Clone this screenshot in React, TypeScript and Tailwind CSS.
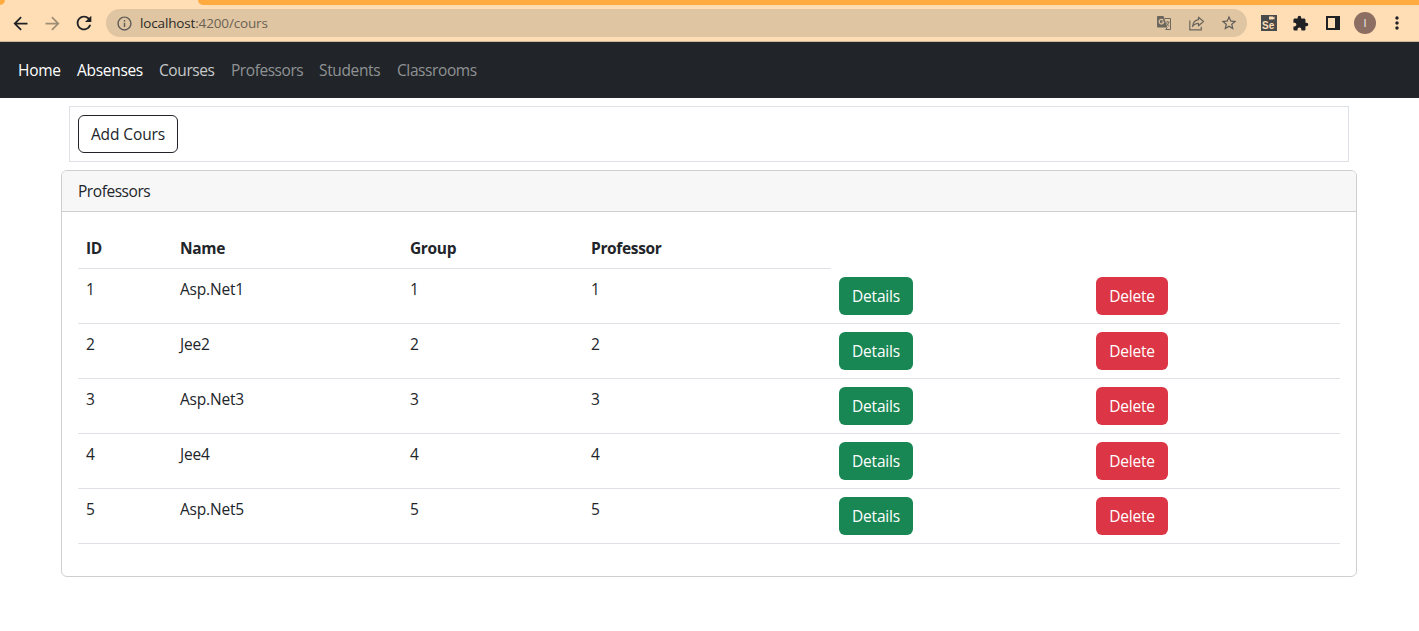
import React from "react";
import {
  MdArrowBack,
  MdArrowForward,
  MdRefresh,
  MdInfoOutline,
  MdStarBorder,
  MdExtension,
  MdMoreVert,
} from "react-icons/md";

const courses = [
  { id: 1, name: "Asp.Net1", group: 1, professor: 1 },
  { id: 2, name: "Jee2", group: 2, professor: 2 },
  { id: 3, name: "Asp.Net3", group: 3, professor: 3 },
  { id: 4, name: "Jee4", group: 4, professor: 4 },
  { id: 5, name: "Asp.Net5", group: 5, professor: 5 },
];

function TranslateIcon() {
  return (
    <svg width="15" height="15" viewBox="0 0 15 15">
      <path d="M1 0h5.500l3.800 11.500H1a1 1 0 0 1-1-1V1a1 1 0 0 1 1-1z" fill="#6b665e" />
      <path d="M6.300 4.300A2.300 2.300 0 1 0 6.700 6H4.600" fill="none" stroke="#dfc5a1" strokeWidth="1.200" />
      <path d="M7.500 2.500h6v11H8.700l1.500-2" fill="none" stroke="#6b665e" strokeWidth="1" />
      <path d="M8.500 6h4M10.700 5v1M12 6c-.4 1.800-1.300 3-2.500 4M9.500 7c.5 1.500 1.500 2.500 2.700 3.400" fill="none" stroke="#6b665e" strokeWidth=".8" />
    </svg>
  );
}

function ShareIcon() {
  return (
    <svg width="16" height="15" viewBox="0 0 16 15" fill="none" stroke="#6b665e" strokeWidth="1.200">
      <path d="M.8 4.500v9.300h11.500v-3" />
      <path d="M9.500 1.200l5 4.300-5 4.300V7.300C6.800 7.300 4.800 8.200 3.500 10.500 3.900 6.700 6 4.200 9.500 3.700z" strokeLinejoin="round" />
    </svg>
  );
}

function SeleniumIcon() {
  return (
    <svg width="16" height="16" viewBox="0 0 16 16">
      <path d="M0 0h16v16H0z" fill="#494b4b" />
      <path d="M8 1.500h4v1l1.500-1v3l-1.500-.6v.6H8z" fill="#ffdeb5" />
      <text x="1" y="13.500" fontSize="10" fontWeight="700" fill="#ffdeb5" fontFamily="Liberation Sans, sans-serif">
        Se
      </text>
    </svg>
  );
}

function BrowserBar() {
  return (
    <div className="h-[42px] border-b border-[#c9b598] bg-[#ffdeb5]">
      <div className="flex h-[5px] justify-between">
        <div className="h-[5px] w-[5px] rounded-br-[5px] bg-[#ffab40]" />
        <div className="h-[5px] w-[1221px] rounded-bl-[5px] bg-[#ffab40]" />
      </div>
      <div className="flex h-9 items-center pl-[9.500px] text-[#202124]">
        <MdArrowBack size={21} />
        <MdArrowForward size={21} className="ml-[11px] text-[#a08d75]" />
        <MdRefresh size={22} className="ml-[10px]" />
        <div className="ml-[11.500px] flex h-7 w-[1141px] items-center rounded-full bg-[#dfc5a1] pl-[9.500px] text-[#5f5c58]">
          <MdInfoOutline size={17} />
          <div className="ml-[7.500px] grow text-[13.500px] tracking-[-0.15px] text-[#6b6255]">
            <span className="text-[#2b2a28]">localhost</span>:4200/cours
          </div>
          <TranslateIcon />
          <div className="ml-[17px]"><ShareIcon /></div>
          <MdStarBorder size={18} className="ml-[15px] mr-[9px]" />
        </div>
        <div className="ml-[14px]"><SeleniumIcon /></div>
        <MdExtension size={17} className="ml-[15px]" />
        <svg width="14" height="14" viewBox="0 0 14 14" className="ml-[17px]">
          <path d="M0 0h14v14H0zM2 2v10h7V2z" fill="currentColor" fillRule="evenodd" />
        </svg>
        <div className="ml-[14px] flex h-[22px] w-[22px] items-center justify-center rounded-full bg-[#8d6e63] text-[11px] text-[#eee]">
          I
        </div>
        <MdMoreVert size={20} className="ml-[11px]" />
      </div>
    </div>
  );
}

function NavBar() {
  return (
    <nav className="flex h-14 items-center bg-[#212529] pl-[18px] text-[#909294]">
      <a className="w-[59px] tracking-[-0.3px] text-white">Home</a>
      <a className="w-[82px] tracking-[-0.3px] text-white">Absenses</a>
      <a className="w-[72px] tracking-[-0.4px] text-[#c8c9ca]">Courses</a>
      <a className="w-[88px] tracking-[-0.45px]">Professors</a>
      <a className="w-[78px] tracking-[-0.35px]">Students</a>
      <a className="tracking-[-0.4px]">Classrooms</a>
    </nav>
  );
}

function CourseTable() {
  return (
    <table className="w-[1262px] table-fixed border-separate border-spacing-0 text-left">
      <colgroup>
        <col className="w-[94px]" />
        <col className="w-[230px]" />
        <col className="w-[181px]" />
        <col className="w-[248px]" />
        <col className="w-[257px]" />
        <col className="w-[252px]" />
      </colgroup>
      <thead>
        <tr className="h-[41px]">
          {["ID", "Name", "Group", "Professor"].map((title) => (
            <th key={title} className="border-b border-[#dee2e6] px-2 py-0 font-bold tracking-[-0.35px]">
              {title}
            </th>
          ))}
        </tr>
      </thead>
      <tbody className="align-top [&_td]:border-b [&_td]:border-[#dee2e6] [&_td]:px-2 [&_td]:pt-2">
        {courses.map((c) => (
          <tr key={c.id} className="h-[55px]">
            <td>{c.id}</td>
            <td className="tracking-[-0.2px]">{c.name}</td>
            <td>{c.group}</td>
            <td>{c.professor}</td>
            <td>
              <button className="block h-[38px] w-[74px] rounded-md bg-[#198754] tracking-[-0.2px] text-white">Details</button>
            </td>
            <td>
              <button className="block h-[38px] w-[72px] rounded-md bg-[#dc3545] tracking-[-0.2px] text-white">Delete</button>
            </td>
          </tr>
        ))}
      </tbody>
    </table>
  );
}

export default function App() {
  return (
    <div className="h-[631px] overflow-hidden bg-white font-['Open_Sans','Noto_Sans',sans-serif] text-[15.500px] leading-6 text-[#212529]">
      <BrowserBar />
      <NavBar />
      <main className="pl-[61px]">
        <div className="ml-2 mt-2 h-14 w-[1280px] border border-[#dee2e6] p-2">
          <button className="h-[38px] w-[100px] rounded-md border border-[#212529] tracking-[-0.1px]">Add Cours</button>
        </div>
        <section className="mt-2 h-[407px] w-[1296px] overflow-hidden rounded-md border border-[#cfcfcf]">
          <header className="flex h-[41px] items-center border-b border-[#cfcfcf] bg-[#f7f7f7] pl-4 tracking-[-0.45px]">Professors</header>
          <div className="px-4 pt-4">
            <CourseTable />
          </div>
        </section>
      </main>
    </div>
  );
}
